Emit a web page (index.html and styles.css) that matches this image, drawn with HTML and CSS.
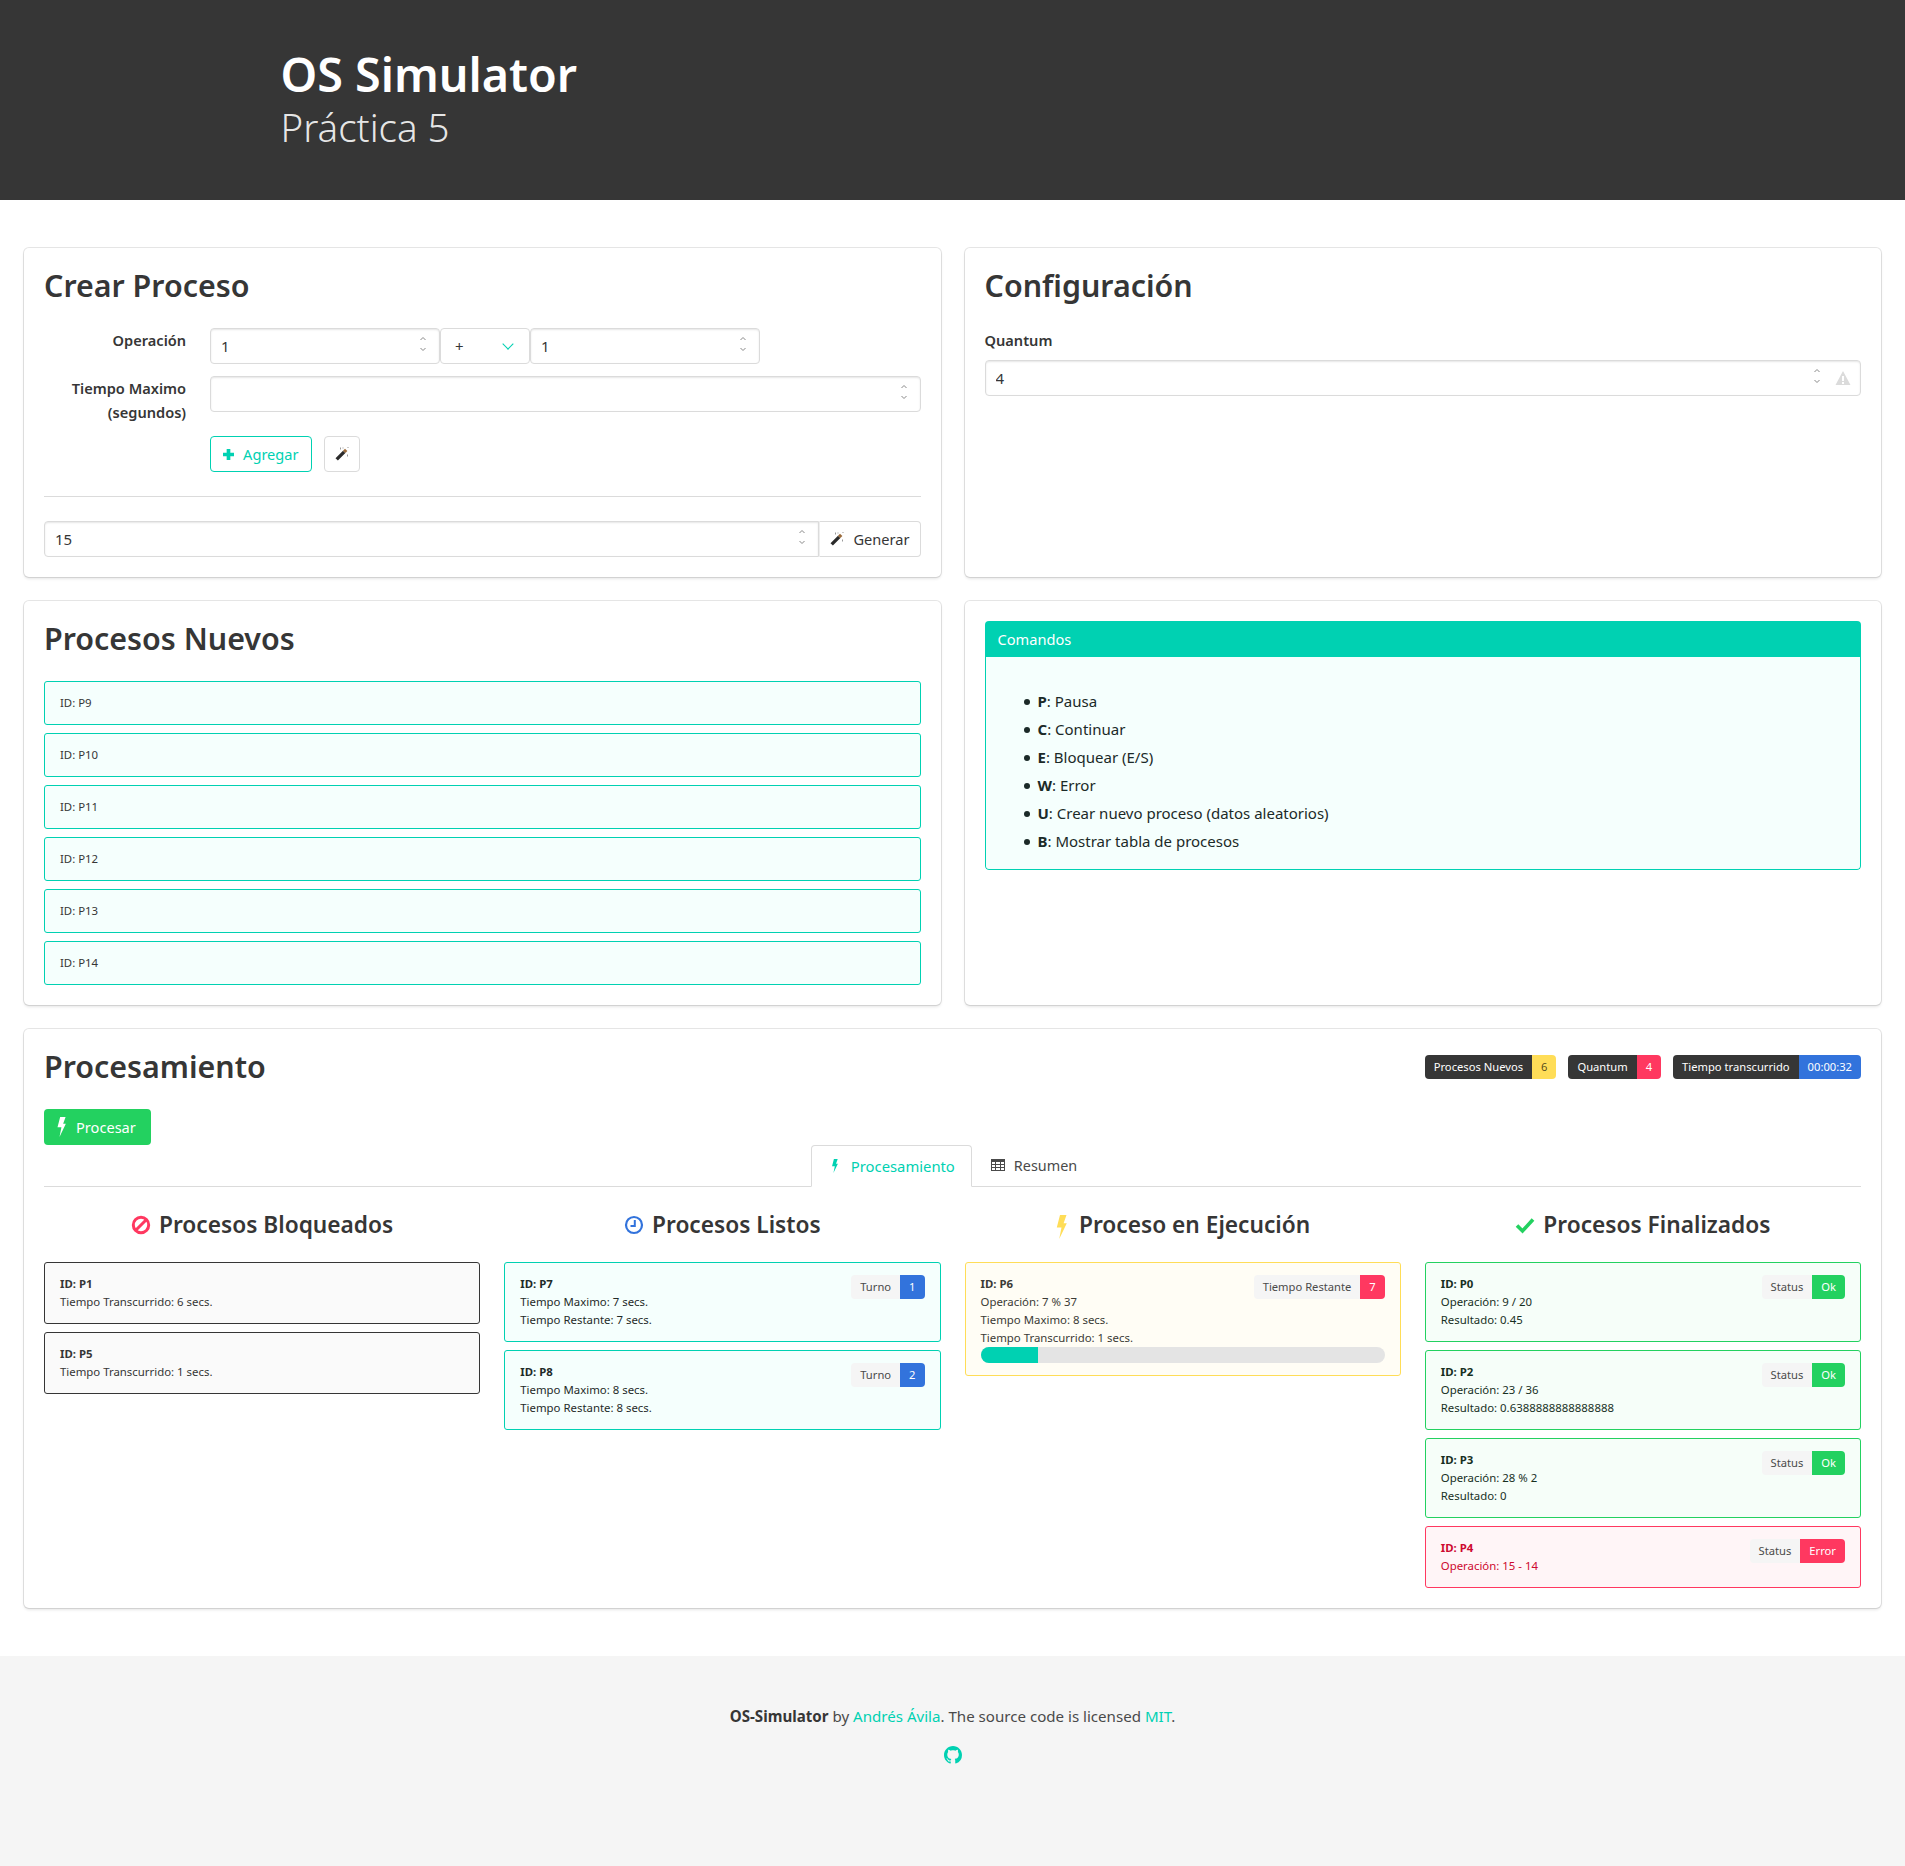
FILE: index.html
```html
<!DOCTYPE html>
<html lang="es">
<head>
  <meta charset="UTF-8">
  <title>OS Simulator</title>
  <link rel="stylesheet" href="styles.css">
</head>
<body>
  <svg class="sprites" width="0" height="0">
    <symbol id="i-bolt" viewBox="0 0 12 24"><path d="M5 0h6.5L8.6 8.2h3.2L4.2 24l2.3-11.6H1.8z"/></symbol>
    <symbol id="i-wand" viewBox="0 0 14 14">
      <path d="M.5 11.2 8 3.7l2.4 2.4-7.5 7.5z" fill="#2b2b2b"/>
      <path d="M8 3.7l2-2 2.4 2.4-2 2z" fill="#9a6a3a"/>
      <path d="M5 .5h1v2H5zM12 7.5h1v2h-1zM12.5 0h1v1h-1zM7.5 .5h1v1h-1z" fill="#9a9a9a"/>
    </symbol>
    <symbol id="i-plus" viewBox="0 0 12 12"><path d="M4 0h4v4h4v4H8v4H4V8H0V4h4z"/></symbol>
  </svg>

  <header class="hero">
    <div class="container">
      <h1 class="hero-title">OS Simulator</h1>
      <h2 class="hero-subtitle">Práctica 5</h2>
    </div>
  </header>

  <main class="section">
    <div class="columns">
      <section class="card">
        <h2 class="title">Crear Proceso</h2>
        <div class="field-row">
          <label class="field-label">Operación</label>
          <div class="field-body">
            <input class="input op-input" type="number" value="1">
            <div class="select-wrap"><select class="select"><option>+</option></select></div>
            <input class="input op-input" type="number" value="1">
          </div>
        </div>
        <div class="field-row">
          <label class="field-label tall">Tiempo Maximo (segundos)</label>
          <div class="field-body">
            <input class="input" type="number">
          </div>
        </div>
        <div class="field-row">
          <div class="field-label"></div>
          <div class="field-body btn-row">
            <button type="button" class="btn btn-outline"><svg class="ico ico-plus"><use href="#i-plus"/></svg>Agregar</button>
            <button type="button" class="btn btn-icon"><svg class="ico ico-wand"><use href="#i-wand"/></svg></button>
          </div>
        </div>
        <hr class="divider">
        <div class="addon-group">
          <input class="input" type="number" value="15">
          <button type="button" class="btn addon"><svg class="ico ico-wand"><use href="#i-wand"/></svg>Generar</button>
        </div>
      </section>

      <section class="card">
        <h2 class="title">Configuración</h2>
        <label class="stacked-label">Quantum</label>
        <div class="icon-input">
          <input class="input" type="number" value="4">
          <svg class="warn" viewBox="0 0 16 16"><path d="M8 1 15.5 15H.5zM7 6v5h2V6zM7 12v2h2v-2z" fill-rule="evenodd"/></svg>
        </div>
      </section>

      <section class="card">
        <h2 class="title">Procesos Nuevos</h2>
        <ul class="stack">
          <li class="proc new-item">ID: P9</li>
          <li class="proc new-item">ID: P10</li>
          <li class="proc new-item">ID: P11</li>
          <li class="proc new-item">ID: P12</li>
          <li class="proc new-item">ID: P13</li>
          <li class="proc new-item">ID: P14</li>
        </ul>
      </section>

      <section class="card">
        <div class="message">
          <div class="message-head">Comandos</div>
          <div class="message-body">
            <ul class="cmd-list">
              <li><strong>P</strong>: Pausa</li>
              <li><strong>C</strong>: Continuar</li>
              <li><strong>E</strong>: Bloquear (E/S)</li>
              <li><strong>W</strong>: Error</li>
              <li><strong>U</strong>: Crear nuevo proceso (datos aleatorios)</li>
              <li><strong>B</strong>: Mostrar tabla de procesos</li>
            </ul>
          </div>
        </div>
      </section>
    </div>

    <section class="card card-wide">
      <div class="level">
        <h2 class="title">Procesamiento</h2>
        <div class="level-tags">
          <span class="tags"><span class="tag tag-dark">Procesos Nuevos</span><span class="tag tag-yellow">6</span></span>
          <span class="tags"><span class="tag tag-dark">Quantum</span><span class="tag tag-red">4</span></span>
          <span class="tags"><span class="tag tag-dark">Tiempo transcurrido</span><span class="tag tag-blue">00:00:32</span></span>
        </div>
      </div>
      <button type="button" class="btn btn-green"><svg class="ico ico-bolt"><use href="#i-bolt"/></svg>Procesar</button>

      <ul class="tabs">
        <li class="tab active"><svg class="ico ico-bolt-sm"><use href="#i-bolt"/></svg>Procesamiento</li>
        <li class="tab">
          <svg class="ico ico-table" viewBox="0 0 14 12"><path fill-rule="evenodd" d="M0 0h14v12H0zM1 3v2h3V3zm4 0v2h4V3zm5 0v2h3V3zM1 6v2h3V6zm4 0v2h4V6zm5 0v2h3V6zM1 9v2h3V9zm4 0v2h4V9zm5 0v2h3V9z"/></svg>Resumen
        </li>
      </ul>

      <div class="board">
        <div class="board-col">
          <h3 class="col-title">
            <svg class="col-ico" viewBox="0 0 20 20"><circle cx="10" cy="10" r="7.7" fill="none" stroke="#ff3860" stroke-width="3"/><path d="M5 15 15 5" stroke="#ff3860" stroke-width="3"/></svg>
            Procesos Bloqueados
          </h3>
          <div class="stack">
            <div class="proc proc-dark"><strong>ID: P1</strong><br>Tiempo Transcurrido: 6 secs.</div>
            <div class="proc proc-dark"><strong>ID: P5</strong><br>Tiempo Transcurrido: 1 secs.</div>
          </div>
        </div>

        <div class="board-col">
          <h3 class="col-title">
            <svg class="col-ico" viewBox="0 0 20 20"><circle cx="10" cy="10" r="8" fill="none" stroke="#3273dc" stroke-width="2.2"/><path d="M10.8 5v6H6.5" fill="none" stroke="#3273dc" stroke-width="2"/></svg>
            Procesos Listos
          </h3>
          <div class="stack">
            <div class="proc proc-teal">
              <span class="tags proc-tag"><span class="tag tag-light">Turno</span><span class="tag tag-blue">1</span></span>
              <strong>ID: P7</strong><br>Tiempo Maximo: 7 secs.<br>Tiempo Restante: 7 secs.
            </div>
            <div class="proc proc-teal">
              <span class="tags proc-tag"><span class="tag tag-light">Turno</span><span class="tag tag-blue">2</span></span>
              <strong>ID: P8</strong><br>Tiempo Maximo: 8 secs.<br>Tiempo Restante: 8 secs.
            </div>
          </div>
        </div>

        <div class="board-col">
          <h3 class="col-title">
            <svg class="col-ico bolt-yellow"><use href="#i-bolt"/></svg>
            Proceso en Ejecución
          </h3>
          <div class="stack">
            <div class="proc proc-yellow">
              <span class="tags proc-tag"><span class="tag tag-light">Tiempo Restante</span><span class="tag tag-red">7</span></span>
              <strong>ID: P6</strong><br>Operación: 7 % 37<br>Tiempo Maximo: 8 secs.<br>Tiempo Transcurrido: 1 secs.
              <div class="progress"><div class="progress-bar" style="width: 14.28%"></div></div>
            </div>
          </div>
        </div>

        <div class="board-col">
          <h3 class="col-title">
            <svg class="col-ico" viewBox="0 0 20 20"><path d="M2 10.5 7.5 16 18 4.5" fill="none" stroke="#23d160" stroke-width="3.6"/></svg>
            Procesos Finalizados
          </h3>
          <div class="stack">
            <div class="proc proc-green">
              <span class="tags proc-tag"><span class="tag tag-light">Status</span><span class="tag tag-green">Ok</span></span>
              <strong>ID: P0</strong><br>Operación: 9 / 20<br>Resultado: 0.45
            </div>
            <div class="proc proc-green">
              <span class="tags proc-tag"><span class="tag tag-light">Status</span><span class="tag tag-green">Ok</span></span>
              <strong>ID: P2</strong><br>Operación: 23 / 36<br>Resultado: 0.6388888888888888
            </div>
            <div class="proc proc-green">
              <span class="tags proc-tag"><span class="tag tag-light">Status</span><span class="tag tag-green">Ok</span></span>
              <strong>ID: P3</strong><br>Operación: 28 % 2<br>Resultado: 0
            </div>
            <div class="proc proc-red">
              <span class="tags proc-tag"><span class="tag tag-light">Status</span><span class="tag tag-red">Error</span></span>
              <strong>ID: P4</strong><br>Operación: 15 - 14
            </div>
          </div>
        </div>
      </div>
    </section>
  </main>

  <footer class="footer">
    <p><strong>OS-Simulator</strong> by <a href="#">Andrés Ávila</a>. The source code is licensed <a href="#">MIT</a>.</p>
    <p class="footer-icon">
      <a href="#"><svg viewBox="0 0 16 16" width="18" height="18"><path d="M8 0C3.58 0 0 3.58 0 8c0 3.54 2.29 6.53 5.47 7.59.4.07.55-.17.55-.38 0-.19-.01-.82-.01-1.49-2.01.37-2.53-.49-2.69-.94-.09-.23-.48-.94-.82-1.13-.28-.15-.68-.52-.01-.53.63-.01 1.08.58 1.23.82.72 1.21 1.87.87 2.33.66.07-.52.28-.87.51-1.07-1.78-.2-3.64-.89-3.64-3.95 0-.87.31-1.59.82-2.15-.08-.2-.36-1.02.08-2.12 0 0 .67-.21 2.2.82.64-.18 1.32-.27 2-.27.68 0 1.36.09 2 .27 1.53-1.04 2.2-.82 2.2-.82.44 1.1.16 1.92.08 2.12.51.56.82 1.27.82 2.15 0 3.07-1.87 3.75-3.65 3.95.29.25.54.73.54 1.48 0 1.07-.01 1.93-.01 2.2 0 .21.15.46.55.38A8.013 8.013 0 0016 8c0-4.42-3.58-8-8-8z"/></svg></a>
    </p>
  </footer>
</body>
</html>
```

FILE: styles.css
```css
* { box-sizing: border-box; }
html, body { margin: 0; padding: 0; }
body {
  min-height: 100vh;
  display: flex;
  flex-direction: column;
  font-family: "Noto Sans", "Open Sans", sans-serif;
  font-size: 15px;
  line-height: 24px;
  color: #4a4a4a;
  background: #fff;
}
strong { color: inherit; font-weight: 700; }
a { color: #00d1b2; text-decoration: none; }
ul { list-style: none; margin: 0; padding: 0; }
h1, h2, h3, p { margin: 0; }
.sprites { position: absolute; }
.ico { display: inline-block; fill: currentColor; flex: none; }

/* header */
.hero { height: 200px; padding-top: 47px; background: #363636; color: #fff; }
.container { width: 1344px; margin: 0 auto; }
.hero-title { font-size: 46.7px; line-height: 54px; font-weight: 600; }
.hero-subtitle { padding-top: 2px; font-size: 38.5px; line-height: 48px; font-weight: 300; color: rgba(255, 255, 255, .9); }

/* cards */
.section { padding: 48px 24px; }
.columns { display: grid; grid-template-columns: 1fr 1fr; gap: 24px; margin-bottom: 24px; }
.card {
  padding: 20px;
  background: #fff;
  border-radius: 5px;
  box-shadow: 0 2px 3px rgba(10, 10, 10, .1), 0 0 0 1px rgba(10, 10, 10, .1);
}
.title { font-size: 30.4px; line-height: 36px; font-weight: 600; color: #363636; margin-bottom: 24px; }

/* forms */
.field-row { display: flex; margin-bottom: 12px; }
.field-row:nth-of-type(3) { margin-bottom: 0; }
.field-label { flex: 1 1 0; margin-right: 24px; text-align: right; font-weight: 600; font-size: 14.6px; color: #363636; }
.field-body { flex: 5 1 0; display: flex; min-width: 0; }
.btn-row { gap: 12px; }
.input, .select {
  height: 36px;
  border: 1px solid #dbdbdb;
  border-radius: 4px;
  background: #fff;
  color: #363636;
  font: inherit;
  box-shadow: inset 0 1px 2px rgba(10, 10, 10, .1);
}
.input { width: 100%; padding: 0 12px 0 10px; outline: none; }
/* chevrons instead of the filled native arrows */
.input::-webkit-inner-spin-button {
  -webkit-appearance: none;
  opacity: 1;
  width: 8px;
  height: 16px;
  margin-left: 4px;
  background: url("data:image/svg+xml,%3Csvg xmlns='http://www.w3.org/2000/svg' width='8' height='16' viewBox='0 0 8 16'%3E%3Cpath d='M1.5 4 4 1.500 6.500 4M1.500 12 4 14.500 6.500 12' fill='none' stroke='%23888' stroke-width='1'/%3E%3C/svg%3E") center no-repeat;
}
.op-input { width: 229.5px; flex: none; }
.select-wrap { position: relative; width: 89.5px; flex: none; margin: 0 .5px; }
.select-wrap::after {
  content: "";
  position: absolute;
  top: 12px;
  right: 18px;
  width: 7px;
  height: 7px;
  border: 1px solid #00d1b2;
  border-top: 0;
  border-right: 0;
  transform: rotate(-45deg);
}
.select { width: 100%; padding-left: 14px; appearance: none; box-shadow: none; }
.btn {
  display: inline-flex;
  align-items: center;
  height: 36px;
  padding: 0 12px;
  border: 1px solid #dbdbdb;
  border-radius: 4px;
  background: #fff;
  color: #363636;
  font: inherit;
  font-size: 14.6px;
  cursor: pointer;
}
.btn-outline { width: 102px; border-color: #00d1b2; color: #00d1b2; }
.ico-plus { width: 11px; height: 11px; margin-right: 9px; }
.btn-icon { width: 36px; justify-content: center; padding: 0; }
.ico-wand { width: 14px; height: 14px; }
.divider { height: 1px; margin: 24px 0; border: 0; background: #dbdbdb; }
.addon-group { display: flex; }
.addon-group .input { flex: 1; border-radius: 4px 0 0 4px; }
.addon { flex: none; width: 102px; border-left: 1px solid #eee; border-radius: 0 4px 4px 0; padding: 0 10px; }
.addon .ico-wand { margin-right: 10px; }
.stacked-label { display: block; margin-bottom: 8px; font-weight: 600; font-size: 14.6px; color: #363636; }
.icon-input { position: relative; }
.icon-input .input { padding-right: 39px; }
.warn { position: absolute; top: 10px; right: 10px; width: 16px; height: 16px; fill: #dbdbdb; }

/* process boxes */
.stack { display: flex; flex-direction: column; gap: 8px; }
.proc {
  position: relative;
  padding: 12px 15px;
  border: 1px solid #dbdbdb;
  border-radius: 3px;
  font-size: 11.4px;
  line-height: 18px;
}
.new-item { height: 44px; padding: 12px 15px; border-color: #00d1b2; background: #f5fffd; color: #363636; }
.proc-dark { border-color: #363636; background: #fafafa; color: #363636; }
.proc-teal { border-color: #00d1b2; background: #f5fffd; color: #1f2b29; }
.proc-yellow { border-color: #ffdd57; background: #fffdf5; color: #3b3b36; }
.proc-green { border-color: #23d160; background: #f6fef9; color: #17301f; }
.proc-red { border-color: #ff3860; background: #fff5f7; color: #cd0930; }
.proc-tag { position: absolute; top: 12px; right: 15px; }

/* tags */
.tags { display: inline-flex; }
.tag { display: inline-flex; align-items: center; height: 24px; padding: 0 9px; font-size: 11.2px; line-height: 1; white-space: nowrap; }
.tag:first-child { border-radius: 4px 0 0 4px; }
.tag:last-child { border-radius: 0 4px 4px 0; }
.tag-dark { background: #363636; color: #fff; }
.tag-light { background: #f5f5f5; color: #4a4a4a; }
.tag-yellow { background: #ffdd57; color: rgba(0, 0, 0, .7); }
.tag-red { background: #ff3860; color: #fff; }
.tag-blue { background: #3273dc; color: #fff; }
.tag-green { background: #23d160; color: #fff; }

/* message */
.message { border-radius: 4px; overflow: hidden; }
.message-head { height: 36px; padding: 0 13px; background: #00d1b2; color: #fff; font-size: 14.6px; line-height: 36px; }
.message-body { padding: 32px 24px 16px; border: 1px solid #00d1b2; border-top: 0; border-radius: 0 0 4px 4px; background: #f5fffd; color: #1b2a28; }
.cmd-list { margin-left: 28px; }
.cmd-list li::before {
  content: "";
  display: inline-block;
  width: 6px;
  height: 6px;
  margin: 0 8px 2px -14px;
  border-radius: 50%;
  background: #1b2a28;
  vertical-align: middle;
}
.cmd-list li + li { margin-top: 4px; }

/* processing panel */
.level { display: flex; justify-content: space-between; align-items: center; height: 36px; margin-bottom: 24px; }
.level .title { margin-bottom: 0; }
.level-tags { display: flex; gap: 12px; }
.btn-green { width: 107px; border-color: transparent; background: #23d160; color: #fff; }
.ico-bolt { width: 10px; height: 20px; margin: 0 10px 0 -1px; }
.tabs { display: flex; justify-content: center; height: 42px; border-bottom: 1px solid #dbdbdb; }
.tab { display: flex; align-items: center; height: 42px; padding: 0 16px; border: 1px solid transparent; border-radius: 4px 4px 0 0; font-size: 14.4px; }
.tab.active { border-color: #dbdbdb; border-bottom-color: #fff; color: #00d1b2; font-size: 14.8px; }
.ico-bolt-sm { width: 7px; height: 14px; margin: 0 13px 0 3px; }
.ico-table { width: 14px; height: 12px; margin: 0 9px 2px 2px; }

.board { display: grid; grid-template-columns: repeat(4, 1fr); gap: 24px; margin-top: 23px; }
.col-title { display: flex; justify-content: center; align-items: center; gap: 8px; height: 30px; margin-bottom: 22px; font-size: 22.7px; line-height: 30px; font-weight: 600; color: #363636; }
.col-ico { width: 20px; height: 20px; flex: none; fill: currentColor; }
.bolt-yellow { width: 12px; height: 24px; margin: 3px 4px 0 0; fill: #ffdd57; }

.progress { height: 16px; border-radius: 8px; background: #e4e4e4; overflow: hidden; }
.progress-bar { height: 100%; background: #00d1b2; }

/* footer */
.footer { flex: 1; padding: 48px 24px; background: #f5f5f5; text-align: center; font-size: 15.1px; }
.footer strong { color: #363636; }
.footer-icon { margin-top: 13px; line-height: 24px; }
.footer-icon svg { display: inline-block; vertical-align: middle; fill: #00d1b2; }
```
